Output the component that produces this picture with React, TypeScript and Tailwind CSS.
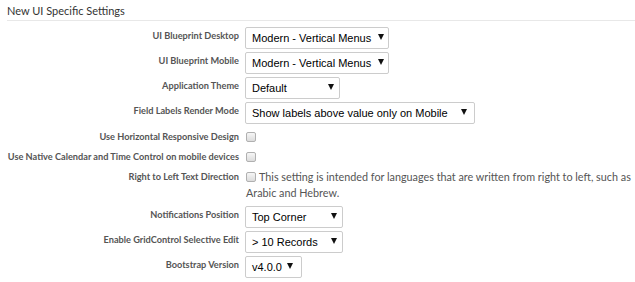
import React from 'react';

function Select({ value, width, arrowPad }: { value: string; width: string; arrowPad: string }) {
  return (
    <div
      className={`h-[22px] ${width} ${arrowPad} flex items-center justify-between border border-[#cccccc] rounded-[2px] bg-white pl-[6px] text-[11px] text-black font-['Liberation_Sans',Arial,sans-serif]`}
    >
      <span className="whitespace-nowrap">{value}</span>
      <svg width="6" height="6" viewBox="0 0 6 6" className="relative -top-[1px] shrink-0">
        <polygon points="0,0 6,0 3,6" fill="#111" />
      </svg>
    </div>
  );
}

function Checkbox() {
  return (
    <span className="inline-block align-middle relative -top-[1px] mr-[3px] w-[10px] h-[10px] rounded-[2px] border border-[#b0b0b0] bg-gradient-to-b from-[#f6f6f6] to-[#dcdcdc]" />
  );
}

function SelectRow({
  label,
  value,
  width,
  arrowPad,
}: {
  label: string;
  value: string;
  width: string;
  arrowPad: string;
}) {
  return (
    <div className="flex items-start h-[25px]">
      <div className="w-[239px] shrink-0 text-right pt-[2px] text-[9.2px] font-bold leading-[14px] text-[#555] whitespace-nowrap">
        {label}
      </div>
      <div className="ml-[6px]">
        <Select value={value} width={width} arrowPad={arrowPad} />
      </div>
    </div>
  );
}

function CheckRow({ label, children }: { label: string; children?: React.ReactNode }) {
  return (
    <div className="flex items-start min-h-[20px]">
      <div className="w-[239px] shrink-0 text-right pt-[3px] text-[9.2px] font-bold leading-[14px] text-[#555] whitespace-nowrap">
        {label}
      </div>
      <div className="ml-[7px] pt-[2px] flex-1 text-[10.8px] leading-[16px] text-[#555]">
        <Checkbox />
        {children}
      </div>
    </div>
  );
}

export default function App() {
  return (
    <div className="w-[635px] h-[282px] bg-white font-['Lato',sans-serif] text-[#333] overflow-hidden">
      <div className="ml-[7px] border-b border-[#e8e8e8] h-[21px] pt-[3px] text-[11px] leading-[16px] text-[#333]">
        New UI Specific Settings
      </div>
      <div className="pt-[6px]">
        <SelectRow label="UI Blueprint Desktop" value="Modern - Vertical Menus" width="w-[144px]" arrowPad="pr-[4px]" />
        <SelectRow label="UI Blueprint Mobile" value="Modern - Vertical Menus" width="w-[144px]" arrowPad="pr-[4px]" />
        <SelectRow label="Application Theme" value="Default" width="w-[95px]" arrowPad="pr-[5px]" />
        <SelectRow
          label="Field Labels Render Mode"
          value="Show labels above value only on Mobile"
          width="w-[230px]"
          arrowPad="pr-[7px]"
        />
        <CheckRow label="Use Horizontal Responsive Design" />
        <CheckRow label="Use Native Calendar and Time Control on mobile devices" />
        <CheckRow label="Right to Left Text Direction">
          This setting is intended for languages that are written from right to left, such as Arabic and Hebrew.
        </CheckRow>
        <div className="h-[5px]" />
        <SelectRow label="Notifications Position" value="Top Corner" width="w-[98px]" arrowPad="pr-[5px]" />
        <SelectRow label="Enable GridControl Selective Edit" value="> 10 Records" width="w-[98px]" arrowPad="pr-[5px]" />
        <SelectRow label="Bootstrap Version" value="v4.0.0" width="w-[57px]" arrowPad="pr-[8px]" />
      </div>
    </div>
  );
}
